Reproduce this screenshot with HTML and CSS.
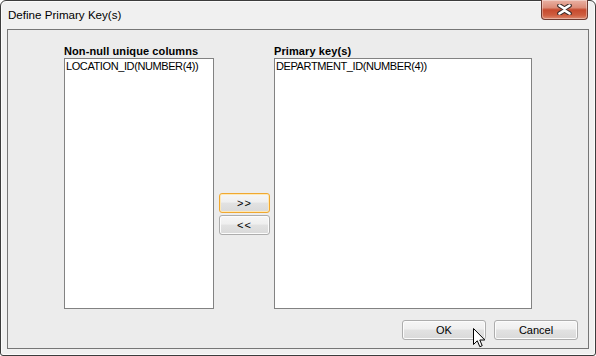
FILE: index.html
```html
<!DOCTYPE html>
<html>
<head>
<meta charset="utf-8">
<link rel="stylesheet" href="styles.css">
</head>
<body>
<div class="window">
  <div class="titlebar">
    <span class="title">Define Primary Key(s)</span>
    <div class="close">
      <svg width="17" height="11" viewBox="0 0 17 11">
        <path d="M3.5 1.5 L8.5 4.6 L13.5 1.5 M3.5 9.5 L8.5 6.4 L13.5 9.5" fill="none" stroke="#3a2a28" stroke-width="4.6" stroke-linecap="round" stroke-linejoin="round"/>
        <path d="M3.5 1.5 L8.5 4.6 L13.5 1.5 M3.5 9.5 L8.5 6.4 L13.5 9.5" fill="none" stroke="#ffffff" stroke-width="2.6" stroke-linecap="round" stroke-linejoin="round"/>
      </svg>
    </div>
  </div>
  <div class="panel">
    <div class="main">
      <div class="col col-left">
        <div class="label">Non-null unique columns</div>
        <div class="list list-left">
          <div class="item">LOCATION_ID(NUMBER(4))</div>
        </div>
      </div>
      <div class="movers">
        <button class="btn btn-move focused">&gt;&gt;</button>
        <button class="btn btn-move">&lt;&lt;</button>
      </div>
      <div class="col col-right">
        <div class="label">Primary key(s)</div>
        <div class="list list-right">
          <div class="item">DEPARTMENT_ID(NUMBER(4))</div>
        </div>
      </div>
    </div>
    <div class="footer">
      <button class="btn btn-action">OK</button>
      <button class="btn btn-action">Cancel</button>
    </div>
  </div>
  <svg class="cursor" width="13" height="20" viewBox="0 0 13 20">
    <path d="M0.5 0.5 L0.5 16.5 L4.3 12.8 L6.8 18.7 L9.2 17.7 L6.8 12 L11.8 12 Z" fill="#ffffff" stroke="#000000" stroke-width="1" stroke-linejoin="miter"/>
  </svg>
</div>
</body>
</html>
```
FILE: styles.css
```css
* { box-sizing: border-box; }
html, body { margin: 0; padding: 0; }
body {
  width: 596px;
  height: 356px;
  background: #ffffff;
  font-family: "Liberation Sans", Arial, sans-serif;
  overflow: hidden;
}
.window {
  position: relative;
  width: 596px;
  height: 356px;
  background: #f0f0f0;
  border: 1px solid #3c3c3c;
  border-radius: 6px 6px 3px 3px;
  box-shadow: inset 0 0 0 1px #fbfbfb;
  display: flex;
  flex-direction: column;
  padding: 0 6px 6px 6px;
}
.titlebar {
  position: relative;
  height: 28px;
  flex: none;
}
.title {
  position: absolute;
  left: 1px;
  top: 7px;
  font-size: 11.6px;
  line-height: 14px;
  color: #000;
}
.close {
  position: absolute;
  right: 1px;
  top: -1px;
  width: 47px;
  height: 20px;
  border: 1px solid #6e3a30;
  border-top: none;
  border-radius: 0 0 4px 4px;
  background: linear-gradient(#eab2a4 0%, #dc8c78 40%, #c64a2e 52%, #cf5e40 80%, #de8a70 100%);
  box-shadow: inset 0 0 0 1px rgba(255,255,255,0.35);
  display: flex;
  align-items: center;
  justify-content: center;
}
.panel {
  flex: 1;
  background: #ececec;
  border: 1px solid #767676;
  display: flex;
  flex-direction: column;
  padding: 15px 10px 8px 56px;
}
.main {
  display: flex;
  align-items: flex-start;
}
.col { display: flex; flex-direction: column; }
.label {
  height: 13px;
  font-size: 11px;
  line-height: 13px;
  font-weight: bold;
  letter-spacing: 0.1px;
  color: #000;
  white-space: nowrap;
}
.list {
  height: 251px;
  background: #ffffff;
  border: 1px solid #828282;
  padding: 1px 1px;
}
.list-left { width: 150px; }
.list-right { width: 258px; }
.item {
  font-size: 11px;
  line-height: 13px;
  letter-spacing: -0.4px;
  color: #000;
  white-space: nowrap;
}
.movers {
  width: 51px;
  margin: 0 4px 0 5px;
  padding-top: 148px;
  display: flex;
  flex-direction: column;
  gap: 2px;
}
.btn {
  font-family: "Liberation Sans", Arial, sans-serif;
  font-size: 11px;
  color: #000;
  height: 20px;
  padding: 0;
  border: 1px solid #adadad;
  border-radius: 3px;
  background: linear-gradient(#f6f6f6 0%, #efefef 45%, #e2e2e2 50%, #d9d9d9 100%);
  box-shadow: inset 0 0 0 1px #fcfcfc;
}
.btn-move {
  width: 51px;
  letter-spacing: 1px;
}
.btn.focused {
  border-color: #f0a830;
  box-shadow: inset 0 0 0 1px #fde8b8;
}
.footer {
  margin-top: 11px;
  display: flex;
  justify-content: flex-end;
  gap: 8px;
}
.btn-action {
  width: 84px;
}
.cursor {
  position: absolute;
  left: 472px;
  top: 327px;
}
```
